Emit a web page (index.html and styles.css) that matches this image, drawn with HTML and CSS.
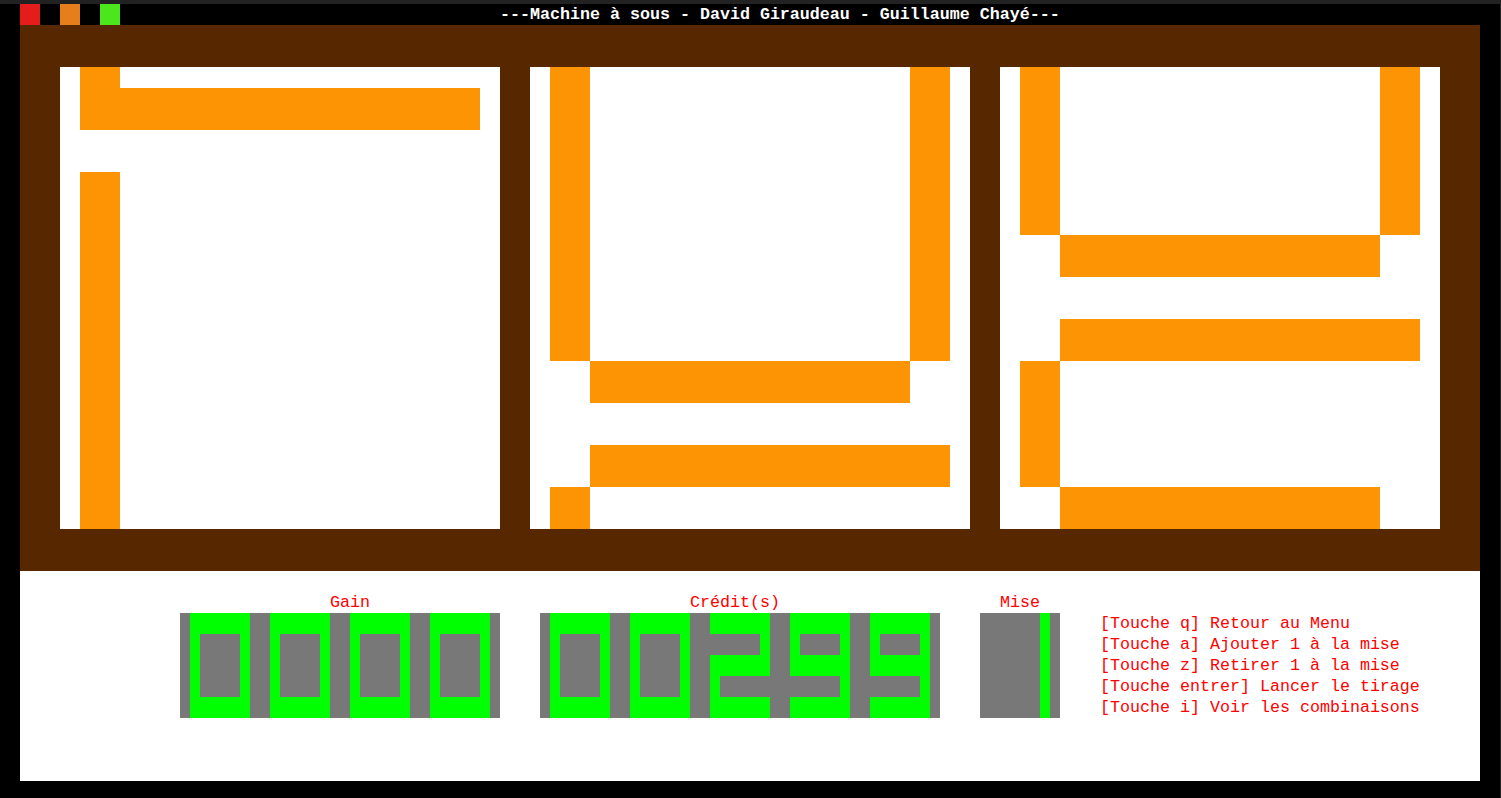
FILE: index.html
```html
<!DOCTYPE html>
<html lang="fr">
<head>
<meta charset="utf-8">
<title>Machine à sous</title>
<link rel="stylesheet" href="styles.css">
</head>
<body>
<div class="topline"></div>
<div class="screen">
  <header class="titlebar">
    <span class="dot dot-red"></span>
    <span class="dot dot-orange"></span>
    <span class="dot dot-green"></span>
    <h1 class="title">---Machine à sous - David Giraudeau - Guillaume Chayé---</h1>
  </header>

  <section class="reels">
    <svg class="reel" viewBox="0 0 22 22" preserveAspectRatio="none">
      <rect width="22" height="22" fill="#fff"/>
      <g fill="#fc9403">
        <rect x="1" y="0" width="2" height="1"/>
        <rect x="1" y="1" width="20" height="2"/>
        <rect x="1" y="5" width="2" height="17"/>
      </g>
    </svg>
    <svg class="reel" viewBox="0 0 22 22" preserveAspectRatio="none">
      <rect width="22" height="22" fill="#fff"/>
      <g fill="#fc9403">
        <rect x="1" y="0" width="2" height="14"/>
        <rect x="19" y="0" width="2" height="14"/>
        <rect x="3" y="14" width="16" height="2"/>
        <rect x="3" y="18" width="18" height="2"/>
        <rect x="1" y="20" width="2" height="2"/>
      </g>
    </svg>
    <svg class="reel" viewBox="0 0 22 22" preserveAspectRatio="none">
      <rect width="22" height="22" fill="#fff"/>
      <g fill="#fc9403">
        <rect x="1" y="0" width="2" height="8"/>
        <rect x="19" y="0" width="2" height="8"/>
        <rect x="3" y="8" width="16" height="2"/>
        <rect x="3" y="12" width="18" height="2"/>
        <rect x="1" y="14" width="2" height="6"/>
        <rect x="3" y="20" width="16" height="2"/>
      </g>
    </svg>
  </section>

  <section class="console">
    <div class="meter">
      <div class="label label-gain">Gain</div>
      <svg class="display display-gain" viewBox="0 0 32 5" preserveAspectRatio="none">
        <rect width="32" height="5" fill="#787878"/>
        <g fill="#00ff00">
          <path d="M1 0h6v5h-6z M2 1v3h4v-3z" fill-rule="evenodd"/>
          <path d="M9 0h6v5h-6z M10 1v3h4v-3z" fill-rule="evenodd"/>
          <path d="M17 0h6v5h-6z M18 1v3h4v-3z" fill-rule="evenodd"/>
          <path d="M25 0h6v5h-6z M26 1v3h4v-3z" fill-rule="evenodd"/>
        </g>
      </svg>
    </div>

    <div class="meter">
      <div class="label label-credit">Crédit(s)</div>
      <svg class="display display-credit" viewBox="0 0 40 5" preserveAspectRatio="none">
        <rect width="40" height="5" fill="#787878"/>
        <g fill="#00ff00">
          <path d="M1 0h6v5h-6z M2 1v3h4v-3z" fill-rule="evenodd"/>
          <path d="M9 0h6v5h-6z M10 1v3h4v-3z" fill-rule="evenodd"/>
          <path d="M17 0h6v1h-6z M22 1h1v1h-1z M17 2h6v1h-6z M17 3h1v1h-1z M17 4h6v1h-6z"/>
          <path d="M25 0h6v3h-6z M26 1v1h4v-1z M30 3h1v1h-1z M25 4h6v1h-6z" fill-rule="evenodd"/>
          <path d="M33 0h6v3h-6z M34 1v1h4v-1z M38 3h1v1h-1z M33 4h6v1h-6z" fill-rule="evenodd"/>
        </g>
      </svg>
    </div>

    <div class="meter">
      <div class="label label-mise">Mise</div>
      <svg class="display display-mise" viewBox="0 0 8 5" preserveAspectRatio="none">
        <rect width="8" height="5" fill="#787878"/>
        <rect x="6" y="0" width="1" height="5" fill="#00ff00"/>
      </svg>
    </div>

    <ul class="keys">
      <li>[Touche q] Retour au Menu</li>
      <li>[Touche a] Ajouter 1 à la mise</li>
      <li>[Touche z] Retirer 1 à la mise</li>
      <li>[Touche entrer] Lancer le tirage</li>
      <li>[Touche i] Voir les combinaisons</li>
    </ul>
  </section>
</div>
</body>
</html>
```

FILE: styles.css
```css
html {
  background: #000;
}
body {
  margin: 0;
  width: 1501px;
  height: 798px;
  background: #000;
  overflow: hidden;
  font-family: "Liberation Mono", "DejaVu Sans Mono", monospace;
  font-size: 16.667px;
  line-height: 21px;
}
.topline {
  height: 4px;
  background: #222;
}
.screen {
  width: 1500px;
  height: 794px;
  border-right: 1px solid #262626;
}
.titlebar {
  display: flex;
  align-items: stretch;
  height: 21px;
  padding-left: 20px;
}
.dot {
  width: 20px;
  height: 21px;
  margin-right: 20px;
}
.dot-red { background: #e51c1c; }
.dot-orange { background: #e67e1c; }
.dot-green { background: #4ce61c; }
.title {
  margin: 0 0 0 360px;
  font-size: 16.667px;
  line-height: 21px;
  font-weight: bold;
  color: #fff;
  white-space: pre;
}
.reels {
  display: flex;
  gap: 30px;
  margin: 0 20px;
  padding: 42px 40px;
  background: #572800;
}
.reel {
  display: block;
  width: 440px;
  height: 462px;
  shape-rendering: crispEdges;
}
.console {
  display: flex;
  align-items: flex-start;
  gap: 40px;
  margin: 0 20px;
  height: 189px;
  padding: 21px 0 0 160px;
  background: #fff;
  color: #ff0000;
}
.meter {
  display: flex;
  flex-direction: column;
}
.label {
  height: 21px;
  white-space: pre;
}
.label-gain { padding-left: 150px; }
.label-credit { padding-left: 150px; }
.label-mise { padding-left: 20px; }
.display {
  display: block;
  height: 105px;
  shape-rendering: crispEdges;
}
.display-gain { width: 320px; }
.display-credit { width: 400px; }
.display-mise { width: 80px; }
.keys {
  list-style: none;
  margin: 21px 0 0;
  padding: 0;
}
.keys li {
  height: 21px;
  white-space: pre;
}
```
